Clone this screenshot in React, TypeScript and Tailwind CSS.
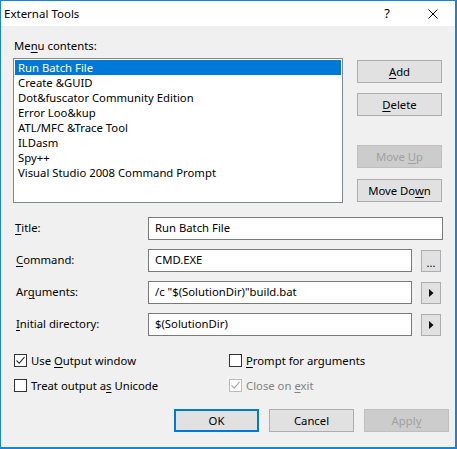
import type { ReactNode } from "react";

const FONT = "font-['Noto_Sans','Liberation_Sans',sans-serif]";

const MENU_ITEMS = [
  "Run Batch File",
  "Create &GUID",
  "Dot&fuscator Community Edition",
  "Error Loo&kup",
  "ATL/MFC &Trace Tool",
  "ILDasm",
  "Spy++",
  "Visual Studio 2008 Command Prompt",
];

function Key({ children }: { children: ReactNode }) {
  return <span className="underline underline-offset-2">{children}</span>;
}

function Button({
  children,
  disabled = false,
  primary = false,
  className = "",
}: {
  children: ReactNode;
  disabled?: boolean;
  primary?: boolean;
  className?: string;
}) {
  const tone = disabled
    ? "border-[#bfbfbf] bg-[#cccccc] text-[#a0a0a0]"
    : primary
      ? "border-[#0078d7] bg-[#e1e1e1] text-black shadow-[inset_0_0_0_1px_#0078d7]"
      : "border-[#adadad] bg-[#e1e1e1] text-black";

  return (
    <div
      className={`flex h-[23px] w-[85px] items-center justify-center border text-[11.3px] leading-none ${tone} ${className}`}
    >
      <span>{children}</span>
    </div>
  );
}

function Field({ value, className = "" }: { value: string; className?: string }) {
  return (
    <div
      className={`flex h-[23px] items-center border border-[#7a7a7a] bg-white pl-[6px] text-[11.3px] text-black ${className}`}
    >
      {value}
    </div>
  );
}

function SideButton({ children }: { children: ReactNode }) {
  return (
    <div className="ml-[9px] flex h-[22px] w-[20px] items-center justify-center border border-[#adadad] bg-[#e1e1e1]">
      {children}
    </div>
  );
}

function Arrow() {
  return (
    <svg width="5" height="8" viewBox="0 0 5 8">
      <path d="M0 0 L4.5 4 L0 8 Z" fill="#000" />
    </svg>
  );
}

function CheckBox({
  checked = false,
  disabled = false,
  children,
}: {
  checked?: boolean;
  disabled?: boolean;
  children: ReactNode;
}) {
  return (
    <div
      className={`flex h-[15px] items-center gap-[4px] text-[11.3px] leading-[15px] ${
        disabled ? "text-[#838383]" : "text-black"
      }`}
    >
      <div
        className={`flex h-[13px] w-[13px] shrink-0 items-center justify-center border bg-white ${
          disabled ? "border-[#bcbcbc]" : "border-[#333333]"
        }`}
      >
        {checked ? (
          <svg width="11" height="11" viewBox="0 0 11 11">
            <path
              d="M1.5 5.5 L4.2 8.2 L9.5 2.2"
              fill="none"
              stroke={disabled ? "#a8a8a8" : "#333333"}
              strokeWidth="1.1"
            />
          </svg>
        ) : null}
      </div>
      <span>{children}</span>
    </div>
  );
}

export default function App() {
  return (
    <div
      className={`flex h-[449px] w-[457px] flex-col border-t border-l border-r-2 border-b-2 border-[#1883d7] bg-[#f0f0f0] ${FONT}`}
    >
      <div className="flex h-[25px] shrink-0 items-center bg-white pl-[3px] text-[11.5px] text-black">
        <span className="flex-1">External Tools</span>
        <span className="mr-[38px] text-[13px]">?</span>
        <svg className="mr-[17px]" width="10" height="10" viewBox="0 0 10 10">
          <path d="M0.5 0.5 L9.5 9.5 M9.5 0.5 L0.5 9.5" stroke="#000" strokeWidth="1" />
        </svg>
      </div>

      <div className="flex flex-col pl-[12px]">
        <div className="mt-[12px] h-[15px] pl-[1px] text-[11.3px] leading-[15px] text-black">
          Me<Key>n</Key>u contents:
        </div>

        <div className="mt-[5px] flex">
          <div className="h-[145px] w-[330px] border border-[#828790] bg-white p-[1px] text-[11.3px] leading-[15px] text-black">
            {MENU_ITEMS.map((item, i) => (
              <div key={item} className={`h-[15px] pl-[3px] ${i === 0 ? "bg-[#0078d7] text-white" : ""}`}>
                {item}
              </div>
            ))}
          </div>

          <div className="ml-[14px] flex flex-col pt-[2px]">
            <Button>
              <Key>A</Key>dd
            </Button>
            <Button className="mt-[10px]">
              <Key>D</Key>elete
            </Button>
            <Button disabled className="mt-[29px]">
              Move <Key>U</Key>p
            </Button>
            <Button className="mt-[11px]">
              Move Do<Key>w</Key>n
            </Button>
          </div>
        </div>

        <div className="mt-[14px] flex flex-col gap-[9px] text-[11.3px] text-black">
          <div className="flex items-center">
            <span className="w-[135px] pl-[2px]">
              <Key>T</Key>itle:
            </span>
            <Field value="Run Batch File" className="w-[295px]" />
          </div>
          <div className="flex items-center">
            <span className="w-[135px] pl-[3px]">
              <Key>C</Key>ommand:
            </span>
            <Field value="CMD.EXE" className="w-[264px]" />
            <SideButton>
              <span className="pt-[3px] text-[11px] leading-none">...</span>
            </SideButton>
          </div>
          <div className="flex items-center">
            <span className="w-[135px] pl-[3px]">
              Ar<Key>g</Key>uments:
            </span>
            <Field value={'/c "$(SolutionDir)"build.bat'} className="w-[264px]" />
            <SideButton>
              <Arrow />
            </SideButton>
          </div>
          <div className="flex items-center">
            <span className="w-[135px] pl-[3px]">
              <Key>I</Key>nitial directory:
            </span>
            <Field value="$(SolutionDir)" className="w-[264px]" />
            <SideButton>
              <Arrow />
            </SideButton>
          </div>
        </div>

        <div className="mt-[17px] grid grid-cols-[215px_1fr] gap-y-[10px] pl-[1px]">
          <CheckBox checked>
            Use <Key>O</Key>utput window
          </CheckBox>
          <CheckBox>
            <Key>P</Key>rompt for arguments
          </CheckBox>
          <CheckBox>
            Treat output a<Key>s</Key> Unicode
          </CheckBox>
          <CheckBox checked disabled>
            Close on <Key>e</Key>xit
          </CheckBox>
        </div>

        <div className="mt-[16px] flex gap-[10px] pl-[161px]">
          <Button primary>OK</Button>
          <Button>Cancel</Button>
          <Button disabled>
            Appl<Key>y</Key>
          </Button>
        </div>
      </div>
    </div>
  );
}
